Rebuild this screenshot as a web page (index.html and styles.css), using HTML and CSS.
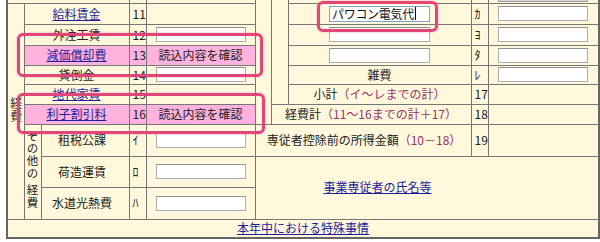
FILE: index.html
```html
<!DOCTYPE html>
<html lang="ja">
<head>
<meta charset="utf-8">
<title>収支内訳書</title>
<link rel="stylesheet" href="styles.css">
</head>
<body>
<div class="page">
<table class="form">
<colgroup>
<col class="c17"><col class="c17"><col class="c88"><col class="c17"><col class="c109"><col class="c16"><col class="c17"><col class="c183"><col class="c17"><col class="c111">
</colgroup>
<tr class="h20">
  <td colspan="3"></td><td class="num"></td><td></td>
  <td rowspan="7" class="gap"></td>
  <td rowspan="6" class="gap"></td>
  <td></td><td class="num"></td><td class="val-top"><input class="box off" type="text" disabled></td>
</tr>
<tr class="h21">
  <td rowspan="9" class="vcell"><span class="vtext">経費</span></td>
  <td colspan="2"><a href="#">給料賃金</a></td>
  <td class="num">11</td><td></td>
  <td><div class="box wide focus">パワコン電気代<span class="caret"></span></div></td>
  <td class="num">ｶ</td><td><input class="box" type="text"></td>
</tr>
<tr class="h21">
  <td colspan="2">外注工賃</td>
  <td class="num">12</td><td><input class="box" type="text"></td>
  <td><input class="box wide" type="text"></td>
  <td class="num">ﾖ</td><td><input class="box" type="text"></td>
</tr>
<tr class="h20">
  <td colspan="2" class="hl"><a href="#">減価償却費</a></td>
  <td class="num hl">13</td><td class="hl">読込内容を確認</td>
  <td><input class="box wide" type="text"></td>
  <td class="num">ﾀ</td><td><input class="box" type="text"></td>
</tr>
<tr class="h19">
  <td colspan="2">貸倒金</td>
  <td class="num">14</td><td><input class="box" type="text"></td>
  <td>雑費</td>
  <td class="num">ﾚ</td><td><input class="box" type="text"></td>
</tr>
<tr class="h20">
  <td colspan="2"><a href="#">地代家賃</a></td>
  <td class="num">15</td><td></td>
  <td>小計<span class="note">（イ～レまでの計）</span></td>
  <td class="num">17</td><td></td>
</tr>
<tr class="h20">
  <td colspan="2" class="hl"><a href="#">利子割引料</a></td>
  <td class="num hl">16</td><td class="hl">読込内容を確認</td>
  <td colspan="2">経費計<span class="note">（11～16までの計＋17）</span></td>
  <td class="num">18</td><td></td>
</tr>
<tr class="h32">
  <td rowspan="3" class="vcell small"><span class="vtext">その他<span class="brk">の</span>経費</span></td>
  <td class="name">租税公課</td>
  <td class="num">ｲ</td><td><input class="box" type="text"></td>
  <td colspan="3" class="total">専従者控除前の所得金額<span class="note">（10－18）</span></td>
  <td class="num">19</td><td></td>
</tr>
<tr class="h31">
  <td class="name">荷造運賃</td>
  <td class="num">ﾛ</td><td><input class="box" type="text"></td>
  <td colspan="5" rowspan="2" class="staff"><a href="#">事業専従者の氏名等</a></td>
</tr>
<tr class="h32">
  <td class="name">水道光熱費</td>
  <td class="num">ﾊ</td><td><input class="box" type="text"></td>
</tr>
<tr class="h19">
  <td colspan="10"><a href="#">本年中における特殊事情</a></td>
</tr>
</table>
<div class="mark m1"></div>
<div class="mark m2"></div>
<div class="mark m3"></div>
</div>
</body>
</html>
```

FILE: styles.css
```css
* { box-sizing: border-box; }
html, body { margin: 0; padding: 0; background: #ffffff; }
body {
  font-family: "Noto Sans CJK JP", "Noto Sans", sans-serif;
  font-size: 12px;
  color: #222222;
}
.page {
  position: relative;
  display: flow-root;
  width: 600px;
  height: 242px;
  overflow: hidden;
}
.form {
  margin: -18px 0 0 6px;
  width: 592px;
  table-layout: fixed;
  border-collapse: collapse;
  background: #fff8dc;
  border: 2px solid #666666;
}
.c17 { width: 17px; }
.c16 { width: 16px; }
.c88 { width: 88px; }
.c109 { width: 109px; }
.c183 { width: 183px; }
.c111 { width: 111px; }
.h19 { height: 19px; }
.h20 { height: 20px; }
.h21 { height: 21px; }
.h31 { height: 31px; }
.h32 { height: 32px; }
.form td {
  border: 1px solid #777777;
  padding: 0;
  text-align: center;
  vertical-align: middle;
  line-height: 14px;
  white-space: nowrap;
  overflow: hidden;
}
.form a { color: #1c1c9c; text-decoration: underline; }
.form td.num { text-align: left; padding-left: 3px; }
.form td.hl { background: #ffb2dd; }
.form td.name { padding-right: 6px; }
.form td.total { padding-left: 2px; }
.form td.staff { text-align: left; padding-left: 68px; padding-bottom: 2px; }
.form td.val-top { vertical-align: bottom; padding-bottom: 1px; }
.note { color: #993366; }
.vtext {
  display: inline-block;
  writing-mode: vertical-rl;
  text-orientation: upright;
  font-size: 12px;
  line-height: 14px;
  letter-spacing: 1px;
}
.vcell.small { padding-bottom: 3px; }
.vcell.small .vtext { font-size: 11.5px; letter-spacing: 1px; }
.vcell.small .brk { letter-spacing: 5px; }
.box {
  display: block;
  margin: 0 auto;
  width: 90px;
  height: 15px;
  padding: 0 2px;
  border: 1px solid #abadb3;
  border-top-color: #8f9095;
  background: #ffffff;
  font: inherit;
}
.box.wide { width: 101px; }
.box.off { background: #d8d8d8; border-color: #9a9a9a; }
.box.focus {
  display: flex;
  align-items: center;
  height: 16px;
  border-color: #7da2ce;
  text-align: left;
  color: #111111;
  letter-spacing: -0.3px;
}
.caret { display: inline-block; width: 1px; height: 13px; background: #000000; margin-left: 1px; }
.mark {
  position: absolute;
  border: 3px solid #e2457a;
  border-radius: 6px;
  box-shadow: 0 0 2px rgba(226, 69, 122, 0.55);
}
.m1 { left: 17px; top: 33px; width: 246px; height: 44px; }
.m2 { left: 17px; top: 93px; width: 248px; height: 41px; }
.m3 { left: 317px; top: 1px; width: 121px; height: 31px; }
```
